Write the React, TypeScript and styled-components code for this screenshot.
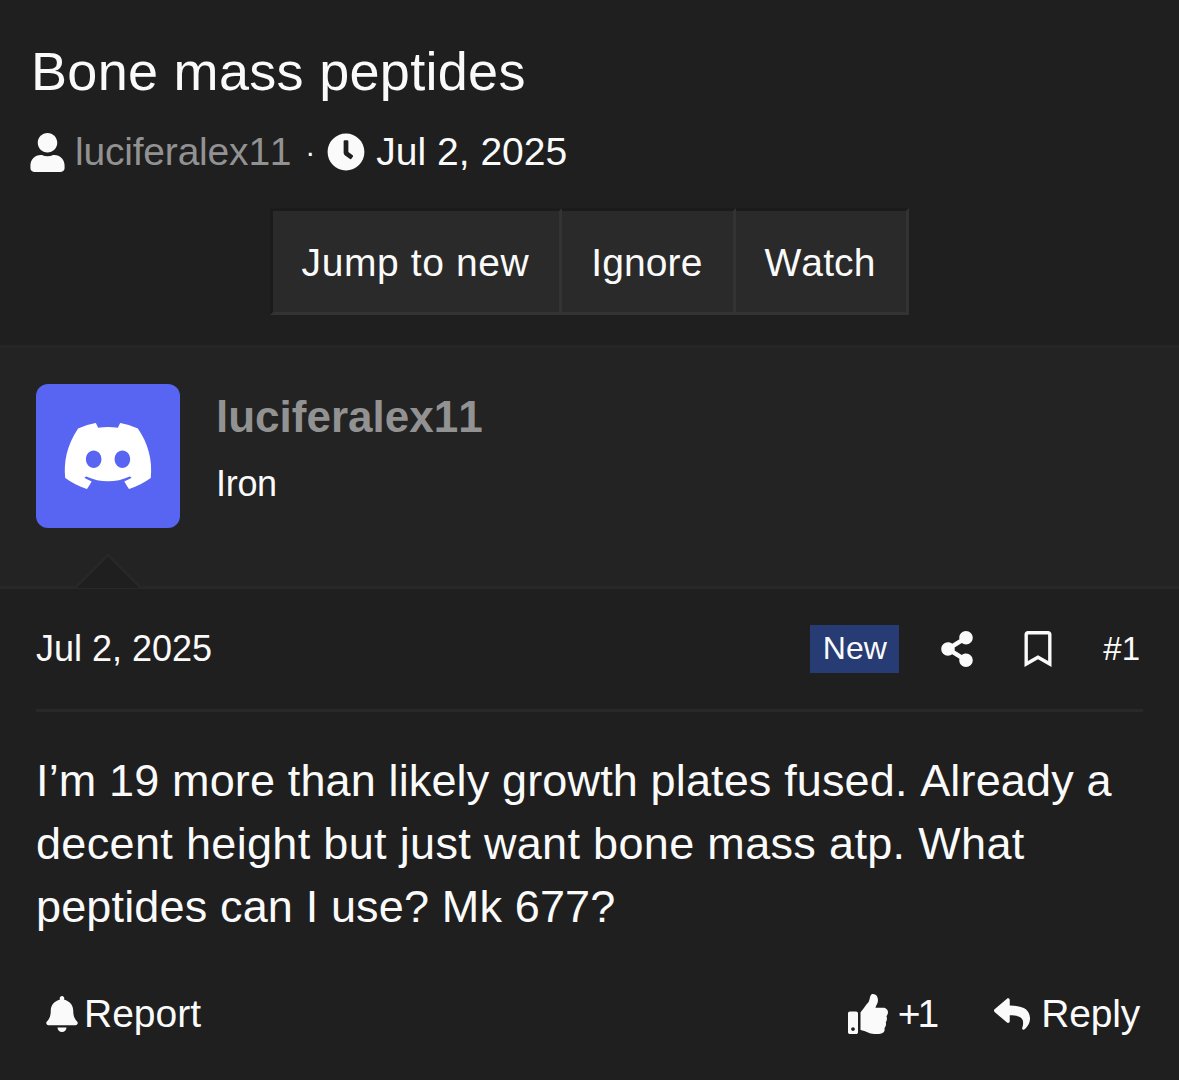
import React from 'react'
import styled, { createGlobalStyle } from 'styled-components'
import { FaUser, FaClock, FaShareAlt, FaRegBookmark, FaBell, FaThumbsUp, FaReply, FaDiscord } from 'react-icons/fa'

const GlobalStyle = createGlobalStyle`
  html, body {
    margin: 0;
    padding: 0;
    background: #1f1f1f;
  }
  body {
    font-family: "Liberation Sans", Arial, sans-serif;
    font-kerning: none;
    color: #fafafa;
  }
`

const Page = styled.div`
  width: 1179px;
  height: 1080px;
  overflow: hidden;
  background: #1f1f1f;
`

const ThreadHeader = styled.header`
  height: 345px;
  box-sizing: border-box;
  padding: 36px 30px 0;
  display: flex;
  flex-direction: column;
`

const Title = styled.h1`
  margin: 0 0 0 1px;
  font-size: 54px;
  line-height: 70px;
  font-weight: 400;
  letter-spacing: 0.3px;
  color: #fafafa;
`

const Meta = styled.div`
  display: flex;
  align-items: center;
  height: 44px;
  margin: 24px 0 0 -2px;
  font-size: 39px;
  color: #fafafa;
  svg {
    flex-shrink: 0;
  }
`

const MetaUser = styled.span`
  color: #929292;
  margin-left: 8px;
  letter-spacing: -0.2px;
`

const MetaDot = styled.span`
  margin: 0 12px 0 14px;
  font-size: 30px;
  color: #fafafa;
`

const MetaDate = styled.span`
  margin-left: 11px;
`

const ButtonBar = styled.div`
  align-self: center;
  display: flex;
  margin-top: 34px;
`

const BarButton = styled.div<{ $tracking: number; $padRight: number; $padLeft: number }>`
  box-sizing: border-box;
  height: 107px;
  padding: 2px ${props => props.$padRight}px 0 ${props => props.$padLeft}px;
  display: flex;
  align-items: center;
  font-size: 39px;
  letter-spacing: ${props => props.$tracking}px;
  background: #2a2a2a;
  border-style: solid;
  border-width: 3px 3px 3px 0;
  border-color: #1b1b1b #333333 #333333 #1b1b1b;
  &:first-child {
    border-left-width: 3px;
  }
`

const PostHead = styled.section`
  box-sizing: border-box;
  height: 244px;
  padding: 36px 36px 0;
  display: flex;
  gap: 36px;
  position: relative;
  background: #232323;
  border-top: 3px solid #262626;
  border-bottom: 3px solid #282828;
`

const Avatar = styled.div`
  width: 144px;
  height: 144px;
  border-radius: 12px;
  background: #5865f2;
  display: flex;
  align-items: center;
  justify-content: center;
  color: #ffffff;
`

const UserInfo = styled.div`
  display: flex;
  flex-direction: column;
`

const UserName = styled.div`
  font-size: 44px;
  line-height: 66px;
  font-weight: 700;
  color: #929292;
`

const UserRank = styled.div`
  margin-top: 1px;
  font-size: 36px;
  line-height: 66px;
  letter-spacing: -0.3px;
  color: #fafafa;
`

const Arrow = styled.div`
  position: absolute;
  left: 83px;
  bottom: -27px;
  width: 50px;
  height: 50px;
  box-sizing: border-box;
  background: #1f1f1f;
  border-top: 3px solid #282828;
  border-left: 3px solid #282828;
  transform: rotate(45deg);
  clip-path: polygon(0 0, 100% 0, 0 100%);
`

const PostBody = styled.article`
  padding: 0 36px;
`

const PostAttribution = styled.div`
  height: 123px;
  box-sizing: border-box;
  display: flex;
  align-items: center;
  justify-content: space-between;
  padding-bottom: 1px;
  border-bottom: 3px solid #282828;
`

const PostDate = styled.span`
  font-size: 36px;
`

const AttributionActions = styled.div`
  display: flex;
  align-items: center;
  margin-right: 3px;
`

const NewBadge = styled.span`
  box-sizing: border-box;
  width: 89px;
  height: 48px;
  display: flex;
  align-items: center;
  justify-content: center;
  font-size: 32px;
  background: #273b74;
`

const ActionIcon = styled.span<{ $left: number }>`
  display: flex;
  margin-left: ${props => props.$left}px;
`

const PostNumber = styled.span`
  margin-left: 47px;
  font-size: 33px;
`

const PostText = styled.div`
  margin-top: 37px;
  font-size: 45px;
  line-height: 63px;
  color: #fafafa;
`

const PostLine = styled.div<{ $tracking: number }>`
  letter-spacing: ${props => props.$tracking}px;
  white-space: nowrap;
`

const PostFooter = styled.div`
  display: flex;
  align-items: center;
  justify-content: space-between;
  margin-top: 54px;
  padding: 0 3px 0 8px;
  font-size: 39px;
`

const FooterGroup = styled.div`
  display: flex;
  align-items: center;
`

const FooterLink = styled.span<{ $gap: number; $left?: number }>`
  display: flex;
  align-items: center;
  gap: ${props => props.$gap}px;
  margin-left: ${props => props.$left || 0}px;
`

const PlusOne = styled.span`
  margin-left: 3px;
  letter-spacing: -3px;
  padding-right: 2px;
`

const ReplyLabel = styled.span`
  letter-spacing: -0.2px;
`

export default function App() {
  return (
    <Page>
      <GlobalStyle />
      <ThreadHeader>
        <Title>Bone mass peptides</Title>
        <Meta>
          <FaUser size={39} />
          <MetaUser>luciferalex11</MetaUser>
          <MetaDot>·</MetaDot>
          <FaClock size={38} />
          <MetaDate>Jul 2, 2025</MetaDate>
        </Meta>
        <ButtonBar>
          <BarButton $tracking={0.6} $padLeft={29} $padRight={30}>Jump to new</BarButton>
          <BarButton $tracking={0.1} $padLeft={29} $padRight={31}>Ignore</BarButton>
          <BarButton $tracking={0.1} $padLeft={28} $padRight={31}>Watch</BarButton>
        </ButtonBar>
      </ThreadHeader>
      <PostHead>
        <Avatar>
          <FaDiscord size={94} />
        </Avatar>
        <UserInfo>
          <UserName>luciferalex11</UserName>
          <UserRank>Iron</UserRank>
        </UserInfo>
        <Arrow />
      </PostHead>
      <PostBody>
        <PostAttribution>
          <PostDate>Jul 2, 2025</PostDate>
          <AttributionActions>
            <NewBadge>New</NewBadge>
            <ActionIcon $left={40}><FaShareAlt size={36} /></ActionIcon>
            <ActionIcon $left={45}><FaRegBookmark size={36} /></ActionIcon>
            <PostNumber>#1</PostNumber>
          </AttributionActions>
        </PostAttribution>
        <PostText>
          <PostLine $tracking={0.14}>I’m 19 more than likely growth plates fused. Already a</PostLine>
          <PostLine $tracking={0.33}>decent height but just want bone mass atp. What</PostLine>
          <PostLine $tracking={0.15}>peptides can I use? Mk 677?</PostLine>
        </PostText>
        <PostFooter>
          <FooterLink $gap={4}><FaBell size={36} />Report</FooterLink>
          <FooterGroup>
            <FooterLink $gap={7}><FaThumbsUp size={40} /><PlusOne>+1</PlusOne></FooterLink>
            <FooterLink $gap={11} $left={56}><FaReply size={36} /><ReplyLabel>Reply</ReplyLabel></FooterLink>
          </FooterGroup>
        </PostFooter>
      </PostBody>
    </Page>
  )
}
